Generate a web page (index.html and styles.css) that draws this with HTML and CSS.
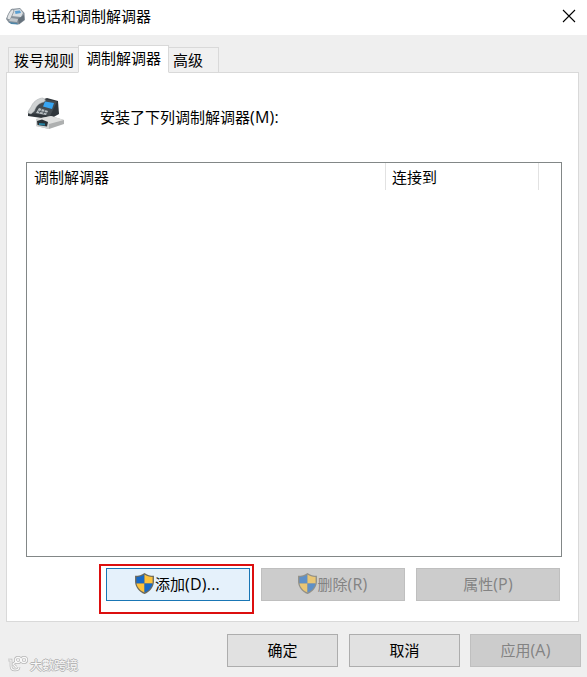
FILE: index.html
```html
<!DOCTYPE html>
<html lang="zh-CN">
<head>
<meta charset="utf-8">
<title>电话和调制解调器</title>
<link rel="stylesheet" href="styles.css">
</head>
<body>
<svg width="0" height="0" class="defs" aria-hidden="true">
  <symbol id="shield" viewBox="0 0 18 20">
    <path d="M9 0C6.500 2 3.500 2.700 0 2.700V8.500C.3 13.500 4 18 9 20C14 18 17.700 13.500 18 8.500V2.700C14.500 2.700 11.500 2 9 0Z" fill="#6d6a5c"/>
    <path d="M9 1.500C7 3 4.500 3.800 1.300 3.900V10H9Z" fill="#1769c5"/>
    <path d="M9 1.500C11 3 13.500 3.800 16.700 3.900V10H9Z" fill="#fdc33c"/>
    <path d="M1.400 10H9V18.600C5 17 1.900 13.500 1.400 10Z" fill="#fdc33c"/>
    <path d="M16.600 10H9V18.600C13 17 16.100 13.500 16.600 10Z" fill="#1769c5"/>
  </symbol>
</svg>
<div class="dialog">
  <header class="titlebar">
    <svg class="title-icon" viewBox="0 0 20 18">
      <path d="M5 1L14 0L18.500 5L19 12L13 16.500L3 15L0 11Z" fill="#87919a"/>
      <path d="M7 2L14 1L17 5L15 9L5 8Z" fill="#d8dde1"/>
      <path d="M9 3L14 2.500L15 5L9.500 6Z" fill="#5a9fd2"/>
      <path d="M1 11C1 8 4 2 7 1L8 3L5 10L4 12Z" fill="#e0e3e5" stroke="#78838b" stroke-width=".7"/>
      <path d="M5 10L12 11L11 14L3 13Z" fill="#c0c6cb"/>
      <path d="M12 11L18 7V12L13 16Z" fill="#66727c"/>
      <path d="M3 14L11 15L12 16.500L5 16Z" fill="#4c85a8"/>
    </svg>
    <h1 class="title">电话和调制解调器</h1>
    <svg class="close" viewBox="0 0 14 14"><path d="M1 1L13 13M13 1L1 13" fill="none" stroke="#000" stroke-width="1.100"/></svg>
  </header>
  <nav class="tabs">
    <div class="tab rules">拨号规则</div>
    <div class="tab active">调制解调器</div>
    <div class="tab advanced">高级</div>
  </nav>
  <main class="panel">
    <div class="intro">
      <svg class="phone" viewBox="0 0 38 34">
        <path d="M14 3L20 1L31 4L32 17L23 22L18 21.500L1 19L1 15Z" fill="#30363b"/>
        <path d="M16 2L30 4.500L23 19L3 16L7 10Z" fill="#454c51"/>
        <path d="M18 4.500L27 6L25 12L16 9.500Z" fill="#38a5f2"/>
        <path d="M1 16C1 13 4 11 5 8C7 4 12 1 16 1L18.500 3L17 5C12 6 9 9 7.500 14L4 17Z" fill="#d0d3d4" stroke="#a4a8aa" stroke-width=".5"/>
        <path d="M12 11L21 14L19 18L9 16Z" fill="#bcc2c5"/>
        <path d="M15 12L12 16.500M18 13L16 17M11 14L20 16" stroke="#4c555b" stroke-width=".9"/>
        <path d="M9 22L24 19L37 23V27L22 32L9 29Z" fill="#aeb0b0"/>
        <path d="M9 22L24 19L37 23L22 27Z" fill="#dedfde"/>
        <path d="M9 22L22 27V32L9 29Z" fill="#d1d3d3"/>
        <path d="M10 24L15 22.500L21 25L20 29.500L10.500 28Z" fill="#293136"/>
        <path d="M12 26L18 26.500V28.500L12 28Z" fill="#2783a2"/>
      </svg>
      <span>安装了下列调制解调器<b>(M):</b></span>
    </div>
    <section class="list">
      <div class="list-head">
        <div class="cell">调制解调器</div>
        <div class="cell">连接到</div>
      </div>
    </section>
    <div class="actions">
      <div class="button focused"><svg class="shield"><use href="#shield"/></svg><span>添加<b>(D)...</b></span><i class="highlight"></i></div>
      <div class="button disabled"><svg class="shield"><use href="#shield"/></svg><span>删除<b>(R)</b></span></div>
      <div class="button disabled"><span>属性<b>(P)</b></span></div>
    </div>
  </main>
  <footer class="footer">
    <div class="watermark">
      <svg viewBox="0 0 22 16"><path id="mark" d="M2 4H5V10Q5 14 9 14Q13 14 13 11M11 5L7 8L10 11" fill="none" stroke="#b6b6b6" stroke-width="2.600"/><g fill="none" stroke="#b6b6b6" stroke-width="2.600"><circle cx="12" cy="4" r="2.700"/><circle cx="18" cy="4" r="2.700"/></g><g fill="none" stroke="#fafafa" stroke-width="1.200"><path d="M2 4H5V10Q5 14 9 14Q13 14 13 11M11 5L7 8L10 11"/><circle cx="12" cy="4" r="2.700"/><circle cx="18" cy="4" r="2.700"/></g></svg>
      <span>大數跨境</span>
    </div>
    <div class="button"><span>确定</span></div>
    <div class="button"><span>取消</span></div>
    <div class="button disabled"><span>应用<b>(A)</b></span></div>
  </footer>
</div>
</body>
</html>
```
FILE: styles.css
```css
* { box-sizing: border-box; }
body {
  margin: 0;
  background: #efefef;
  color: #000;
  font: 15px/22px "Open Sans", "Noto Sans CJK SC", sans-serif;
}
b { font-weight: 400; font-size: 16px; line-height: 1; letter-spacing: .2px; }
.defs { display: block; position: absolute; }
.dialog { width: 587px; height: 677px; display: flex; flex-direction: column; overflow: hidden; white-space: nowrap; }
.titlebar { height: 35px; flex: none; display: flex; background: #fff; padding: 0 11px 0 6px; }
.title-icon { width: 20px; height: 18px; margin-top: 8px; }
.title { margin: 5px auto 0 5px; font: inherit; }
.close { width: 14px; height: 14px; margin-top: 9px; }
.tabs { height: 38px; flex: none; display: flex; align-items: flex-end; padding-left: 8px; margin-bottom: -1px; position: relative; }
.tab { height: 26px; border: 1px solid #d9d9d9; padding: 1px 0 0 5px; background: #f0f0f0; }
.rules { width: 71px; border-right: 0; }
.active { width: 91px; height: 28px; margin-left: -1px; padding: 1px 0 0 7px; background: #fff; border-bottom-color: #fff; }
.advanced { width: 50px; border-left: 0; padding-left: 4px; }
.panel { width: 573px; height: 550px; flex: none; margin-left: 6px; background: #fff; border: 1px solid #d9d9d9; padding: 0 18px 0 19px; }
.intro { height: 89px; display: flex; padding: 24px 0 0 1px; }
.phone { width: 38px; height: 34px; margin-right: 35px; }
.intro span { padding-top: 9px; }
.list { width: 536px; height: 395px; border: 1px solid #828787; }
.list-head { height: 27px; display: grid; grid-template-columns: 359px 153px; }
.cell { border-right: 1px solid #e2e2e2; padding: 3px 0 0 7px; }
.cell + .cell { padding-left: 6px; }
.actions { display: grid; grid-template-columns: repeat(3, 144px); gap: 11px; margin: 11px 0 0 80px; }
.button { height: 33px; border: 1px solid #adadad; background: #e1e1e1; display: flex; justify-content: center; align-items: center; }
.button span { margin-top: -2px; }
.focused { position: relative; background: #e5f1fb; border-color: #1976b5; }
.disabled { background: #ccc; border-color: #bfbfbf; color: #838383; }
.shield { width: 19px; height: 21px; margin: -2px 1px 0 -1px; }
.disabled .shield { opacity: .6; }
.highlight { position: absolute; inset: -5px -5px -14px -8px; border: 2px solid #dc0f0f; }
.footer { display: grid; grid-template-columns: 209px repeat(3, 111px); column-gap: 11px; padding: 12px 0 0 7px; }
.footer .disabled { margin-left: -1px; margin-right: 1px; }
.watermark { display: flex; height: 38px; align-items: flex-end; color: #f8f8f8; font-size: 12px; line-height: 18px; text-shadow: 1px 0 #b5b5b5, -1px 0 #b5b5b5, 0 1px #b5b5b5, 0 -1px #b5b5b5; }
.watermark svg { width: 22px; height: 16px; margin: 0 2px 0 -1px; }
.watermark span { margin-bottom: -3px; }
```
